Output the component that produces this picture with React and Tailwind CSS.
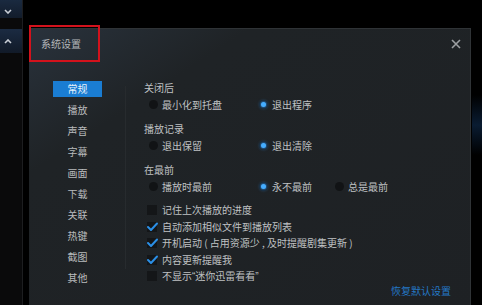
import React from 'react';

const font = { fontFamily: '"Noto Sans CJK SC", "Noto Sans", sans-serif' };
const latin = { fontFamily: '"Liberation Sans", sans-serif' };

const menu = ['常规', '播放', '声音', '字幕', '画面', '下载', '关联', '热键', '截图', '其他'];

const groups = [
  { title: '关闭后', options: ['最小化到托盘', '退出程序'], selected: 1 },
  { title: '播放记录', options: ['退出保留', '退出清除'], selected: 1 },
  { title: '在最前', options: ['播放时最前', '永不最前', '总是最前'], selected: 1 },
];

const checks = [
  { label: '记住上次播放的进度', on: false },
  { label: '自动添加相似文件到播放列表', on: true },
  { label: '开机启动 ( 占用资源少 , 及时提醒剧集更新 )', on: true },
  { label: '内容更新提醒我', on: true },
  {
    label: (
      <>
        不显示<span style={latin}>“</span>迷你迅雷看看<span style={latin}>”</span>
      </>
    ),
    on: false,
  },
];

const optionWidths = ['w-[110px]', 'w-[76px]', 'w-[90px]'];

const Radio = ({ on }) => (
  <span className="w-[9px] h-[9px] rounded-full bg-[#111315] flex items-center justify-center shrink-0">
    {on && <span className="w-[5px] h-[5px] rounded-full bg-[#45adff] shadow-[0_0_3px_1px_rgba(60,160,255,0.7)]" />}
  </span>
);

const Check = ({ on }) => (
  <span className="w-[10px] h-[10px] bg-[#141618] flex items-center justify-center shrink-0">
    {on && (
      <svg width="11" height="10" viewBox="0 0 11 10" className="overflow-visible">
        <polyline points="1,5 4,8 10,1.5" fill="none" stroke="#2b8fe6" strokeWidth="2" strokeLinecap="round" strokeLinejoin="round" />
      </svg>
    )}
  </span>
);

const Chevron = ({ up }) => (
  <svg width="8" height="5" viewBox="0 0 8 5">
    <polyline points={up ? '1,4 4,1 7,4' : '1,1 4,4 7,1'} fill="none" stroke="#c9ced6" strokeWidth="1.6" />
  </svg>
);

export default function App() {
  return (
    <div className="relative w-[482px] h-[305px] bg-black flex overflow-hidden text-[10px] leading-none" style={font}>
      {/* left strip */}
      <div className="w-[23px] h-full bg-[#0a0a0b] border-r border-[#1d1e20] flex flex-col shrink-0">
        <div className="h-[18px] bg-linear-to-b from-[#1a2a40] to-[#121c2b] flex items-end pb-[4px] pl-[4px]">
          <Chevron />
        </div>
        <div className="h-[24px] mt-[11px] bg-linear-to-b from-[#1b2b42] to-[#111a28] flex items-center pl-[4px]">
          <Chevron up />
        </div>
      </div>

      {/* dialog */}
      <div className="ml-[6px] mt-[28px] w-[442px] h-[290px] shrink-0 flex flex-col border-t border-r border-[#2f3336] bg-linear-to-br from-[#29323c] via-[#1f2326] via-25% to-[#1e2124]">
        <div className="h-[30px] flex items-center justify-between pl-[12px] pr-[9px]">
          <span className="text-[#b3b6b9]">系统设置</span>
          <svg width="10" height="10" viewBox="0 0 10 10">
            <path d="M1 1 L9 9 M9 1 L1 9" stroke="#9c9fa2" strokeWidth="1.6" />
          </svg>
        </div>

        <div className="flex flex-1">
          {/* sidebar */}
          <div className="w-[96px] pl-[24px] pt-[19px] flex flex-col">
            {menu.map((m, i) => (
              <div key={m} className="h-[21px] flex items-center">
                <div
                  className={`w-[49px] h-[16px] flex items-center justify-center ${
                    i === 0 ? 'bg-[#1a7dd3] text-[#e8f2fc]' : 'text-[#b9bbbd]'
                  }`}
                >
                  {m}
                </div>
              </div>
            ))}
          </div>
          <div className="w-px h-[183px] mt-[27px] bg-[#272b2e]" />

          {/* content */}
          <div className="flex-1 flex flex-col pl-[18px] pt-[20px] text-[#bfc1c3]">
            {groups.map((g) => (
              <div key={g.title} className="mb-[7px]">
                <div className="h-[17px] flex items-center">{g.title}</div>
                <div className="h-[17px] flex items-center pl-[5px]">
                  {g.options.map((o, i) => (
                    <div key={o} className={`${optionWidths[i]} flex items-center gap-[4px]`}>
                      <Radio on={i === g.selected} />
                      <span>{o}</span>
                    </div>
                  ))}
                </div>
              </div>
            ))}

            {checks.map((c, i) => (
              <div key={i} className="h-[16.5px] flex items-center pl-[3px] gap-[5px]">
                <Check on={c.on} />
                <span>{c.label}</span>
              </div>
            ))}

            <div className="h-[14px] -mt-[1px] flex items-center justify-end pr-[19px]">
              <span className="text-[#2478c4]">恢复默认设置</span>
            </div>
          </div>
        </div>
      </div>

      {/* faint glow behind dialog edge */}
      <div className="absolute right-0 top-[95px] w-[10px] h-[60px] bg-linear-to-b from-transparent via-[#0e2847] to-transparent opacity-70" />

      {/* red annotation box */}
      <div className="absolute left-[29px] top-[25px] w-[71px] h-[37px] border-2 border-[#d3121c]" />
    </div>
  );
}
